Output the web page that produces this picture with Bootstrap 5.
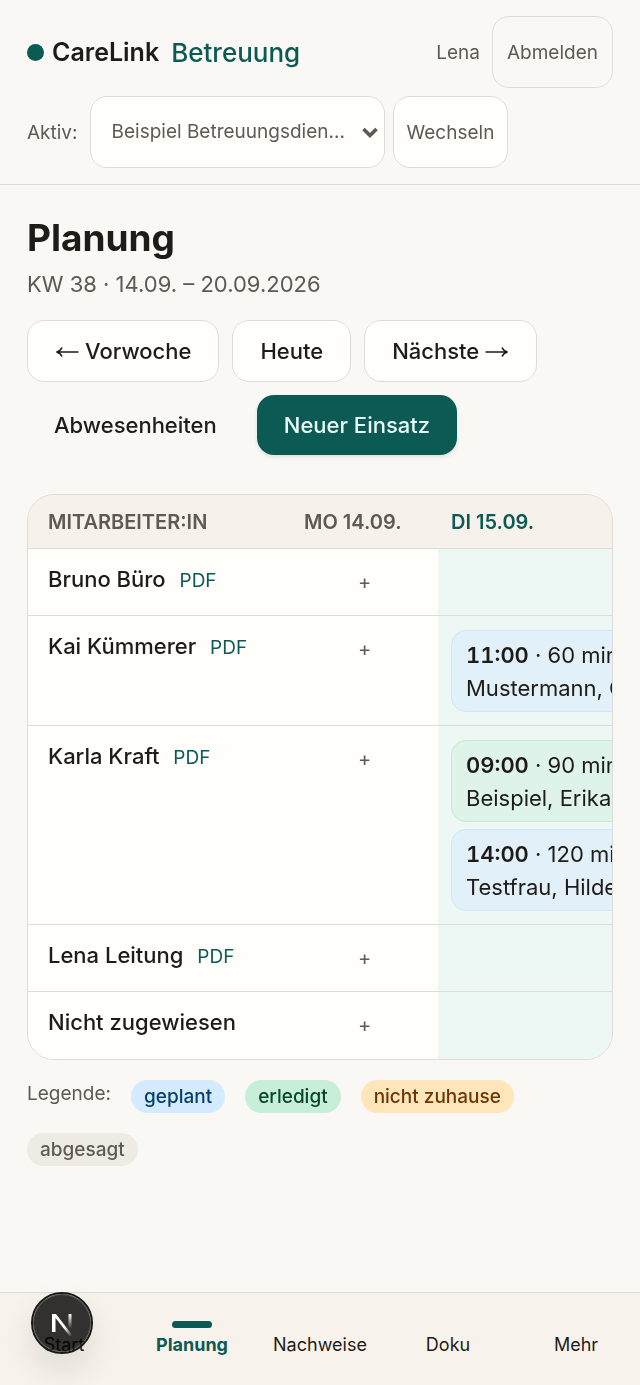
<!DOCTYPE html>
<html lang="de">
<head>
<meta charset="utf-8">
<meta name="viewport" content="width=device-width, initial-scale=1">
<title>CareLink Betreuung – Planung</title>
<link href="https://cdn.jsdelivr.net/npm/bootstrap@5.3.0/dist/css/bootstrap.min.css" rel="stylesheet">
<style>
:root{--ink:#1f1b17;--muted:#5f5953;--line:#dfdcd8;--paper:#f9f8f4;--surface:#fffefb;--sand:#f6f1eb;--brand:#0b5a54}
body{font-family:Inter,"Liberation Sans",sans-serif;font-size:22px;line-height:33px;color:var(--ink);background:var(--paper)}
a{text-decoration:none}
.page-pad{padding-left:27px;padding-right:27px}
.topbar{padding-top:16px;padding-bottom:16px;border-bottom:1px solid var(--line);font-size:19px;color:var(--muted)}
.brand-name{font-size:25px;font-weight:600;color:var(--ink)}
.brand-name .area{font-size:26px;font-weight:500;color:var(--brand)}
.dot{width:17px;height:17px;border-radius:50%;background:var(--brand)}
.box-btn{height:72px;padding:0 14px;border:1px solid var(--line);border-radius:17px;background:transparent;color:var(--muted);font-size:19px}
.filled{background-color:var(--surface);padding:0 13px}
.tenant{width:295px;height:72px;font-size:19px;color:var(--muted);border:1px solid var(--line);border-radius:17px;padding:0 40px 0 21px;background-color:var(--surface);background-size:18px 13px;background-position:right 5px center;background-image:url("data:image/svg+xml,%3Csvg xmlns='http://www.w3.org/2000/svg' viewBox='0 0 18 13'%3E%3Cpath d='M2.500 3l6.500 6.500L15.500 3' fill='none' stroke='%235f5953' stroke-width='3.600'/%3E%3C/svg%3E")}
.title{font-size:37px;line-height:46px;font-weight:700;padding-top:30px}
.period{color:var(--muted);line-height:34px;margin:6px 0 19px}
.tools{gap:13px;margin-bottom:39px}
.tool{padding:0 27px;height:62px;gap:6px;border:1px solid var(--line);border-radius:17px;background:var(--surface);color:var(--ink);font-size:22px;font-weight:500;display:inline-flex;align-items:center}
.tool.plain,.tool.solid{height:60px;border:0}
.tool.plain{background:transparent}
.tool.solid{background:var(--brand);color:#e9faf6;box-shadow:0 2px 4px rgba(0,0,0,.1)}
.plan{border:1px solid var(--line);border-radius:27px;background:var(--surface);margin-bottom:20px;scrollbar-width:none}
.plan::-webkit-scrollbar{display:none}
.plan table{table-layout:fixed;width:700px;margin:0;border-collapse:separate;border-spacing:0}
.plan th,.plan td{vertical-align:top;padding:14px 13px 13px;border-bottom:1px solid var(--line);font-weight:400}
.plan tbody tr:last-child>*{border-bottom:0}
.plan thead th{background:var(--sand);font-size:20px;line-height:26px;font-weight:600;color:var(--muted)}
.plan tr>:first-child{padding-left:20px}
.plan thead .today{color:var(--brand)}
.plan tbody .today{background:#edf7f4}
.plan tbody th{font-weight:500;height:67px}
.plan tbody th a{font-size:19px;font-weight:400;color:var(--brand);margin-left:8px}
.add{display:block;width:100%;border:0;background:none;color:var(--muted);font-size:20px;line-height:39px;padding:0}
.visit{border:1px solid #cfe6fb;background:#e2f0f9;border-radius:15px;padding:8px 14px 6px;white-space:nowrap}
.visit.done{border-color:#c3ebd5;background:#def4e8}
.visit+.visit{margin-top:7px}
.visit time{font-weight:600;font-variant-numeric:tabular-nums}
.legend-row{gap:20px;font-size:19px;color:var(--muted)}
.legend-row .caption{line-height:27px}
.tag{font-weight:500;line-height:33px;border-radius:17px;padding:0 13px}
.tag-plan{background:#d3eaff;color:#063f6b}
.tag-done{background:#c7eed9;color:#06472a}
.tag-away{background:#ffe6ba;color:#6b3606}
.tag-off{background:#eeeae4;color:#5f5953}
.tabs{background:#f7f3ec;border-top:1px solid var(--line);height:93px;font-size:18px;line-height:24px}
.tabs a{flex:1 1 0;color:var(--ink);text-align:center;padding-top:28px}
.tabs a::before{content:"";display:block;width:40px;height:7px;border-radius:4px;margin:0 auto 5px}
.tabs a.active{color:var(--brand);font-weight:700}
.tabs a.active::before{background:var(--brand)}
.devtool{position:absolute;left:31px;top:-1px;width:62px;height:62px;padding:0;border:2px solid #191918;border-radius:50%;background:rgba(0,0,0,.8);background-clip:padding-box;box-shadow:inset 0 0 0 1px rgba(255,255,255,.16),0 16px 32px rgba(0,0,0,.1)}
.devtool svg{display:block;margin:auto}
</style>
</head>
<body>
<header class="topbar page-pad">
  <div class="d-flex align-items-center justify-content-between">
    <a href="#" class="brand-name d-flex align-items-center"><span class="dot me-2"></span><span class="me-2">CareLink</span><span class="area ms-1">Betreuung</span></a>
    <div class="d-flex align-items-center"><span class="me-2 pe-1">Lena</span><button type="button" class="box-btn">Abmelden</button></div>
  </div>
  <form class="d-flex align-items-center gap-2 mt-2">
    <label for="tenant" class="me-1">Aktiv:</label>
    <select id="tenant" class="form-select tenant"><option>Beispiel Betreuungsdien…</option></select>
    <button type="button" class="box-btn filled">Wechseln</button>
  </form>
</header>

<main class="page-pad pb-5">
  <h1 class="title mb-0">Planung</h1>
  <p class="period">KW 38 · 14.09. – 20.09.2026</p>
  <div class="tools d-flex flex-wrap">
    <button type="button" class="tool"><svg width="24" height="14" viewBox="0 0 24 14" fill="none" stroke="currentColor" stroke-width="1.500" aria-hidden="true"><path d="M23.500 8H2M7 3.500Q5.500 7 1.500 8Q5.500 9 7 12.500"/></svg>Vorwoche</button>
    <button type="button" class="tool">Heute</button>
    <button type="button" class="tool">Nächste<svg width="24" height="14" viewBox="0 0 24 14" fill="none" stroke="currentColor" stroke-width="1.500" aria-hidden="true"><path d="M.5 8H22M17 3.500Q18.500 7 22.500 8Q18.500 9 17 12.500"/></svg></button>
    <a href="#" class="tool plain">Abwesenheiten</a>
    <button type="button" class="tool solid">Neuer Einsatz</button>
  </div>

  <div class="plan table-responsive">
    <table>
      <colgroup><col style="width:263px"><col style="width:147px"><col></colgroup>
      <thead><tr><th scope="col">MITARBEITER:IN</th><th scope="col">MO 14.09.</th><th scope="col" class="today">DI 15.09.</th></tr></thead>
      <tbody>
        <tr><th scope="row">Bruno Büro <a href="#">PDF</a></th><td><button type="button" class="add">+</button></td><td class="today"></td></tr>
        <tr><th scope="row">Kai Kümmerer <a href="#">PDF</a></th><td><button type="button" class="add">+</button></td><td class="today">
          <div class="visit"><time>11:00</time> · 60 min<br>Mustermann, Otto</div></td></tr>
        <tr><th scope="row">Karla Kraft <a href="#">PDF</a></th><td><button type="button" class="add">+</button></td><td class="today">
          <div class="visit done"><time>09:00</time> · 90 min<br>Beispiel, Erika</div>
          <div class="visit"><time>14:00</time> · 120 min<br>Testfrau, Hilde</div></td></tr>
        <tr><th scope="row">Lena Leitung <a href="#">PDF</a></th><td><button type="button" class="add">+</button></td><td class="today"></td></tr>
        <tr><th scope="row">Nicht zugewiesen</th><td><button type="button" class="add">+</button></td><td class="today"></td></tr>
      </tbody>
    </table>
  </div>

  <div class="legend-row d-flex flex-wrap">
    <span class="caption">Legende:</span>
    <span class="tag tag-plan">geplant</span>
    <span class="tag tag-done">erledigt</span>
    <span class="tag tag-away">nicht zuhause</span>
    <span class="tag tag-off">abgesagt</span>
  </div>
</main>

<nav class="tabs fixed-bottom d-flex">
  <a href="#">Start</a>
  <a href="#" class="active" aria-current="page">Planung</a>
  <a href="#">Nachweise</a>
  <a href="#">Doku</a>
  <a href="#">Mehr</a>
  <button type="button" class="devtool" aria-label="Entwicklerwerkzeuge">
    <svg width="24" height="26" viewBox="0 0 24 26" fill="none">
      <defs>
        <linearGradient id="fadeStem" x1="0" y1="4" x2="0" y2="19" gradientUnits="userSpaceOnUse"><stop offset="0" stop-color="#fff"/><stop offset="1" stop-color="#fff" stop-opacity="0"/></linearGradient>
        <linearGradient id="fadeDiag" x1="15" y1="17" x2="22" y2="26" gradientUnits="userSpaceOnUse"><stop offset="0" stop-color="#fff"/><stop offset="1" stop-color="#fff" stop-opacity="0"/></linearGradient>
      </defs>
      <path d="M20 4v16" stroke="url(#fadeStem)" stroke-width="3"/>
      <path d="M2 4h4L22.500 25.500L20 26.500L5.500 8V22H2z" fill="url(#fadeDiag)"/>
    </svg>
  </button>
</nav>
<script src="https://cdn.jsdelivr.net/npm/bootstrap@5.3.0/dist/js/bootstrap.bundle.min.js"></script>
</body>
</html>
